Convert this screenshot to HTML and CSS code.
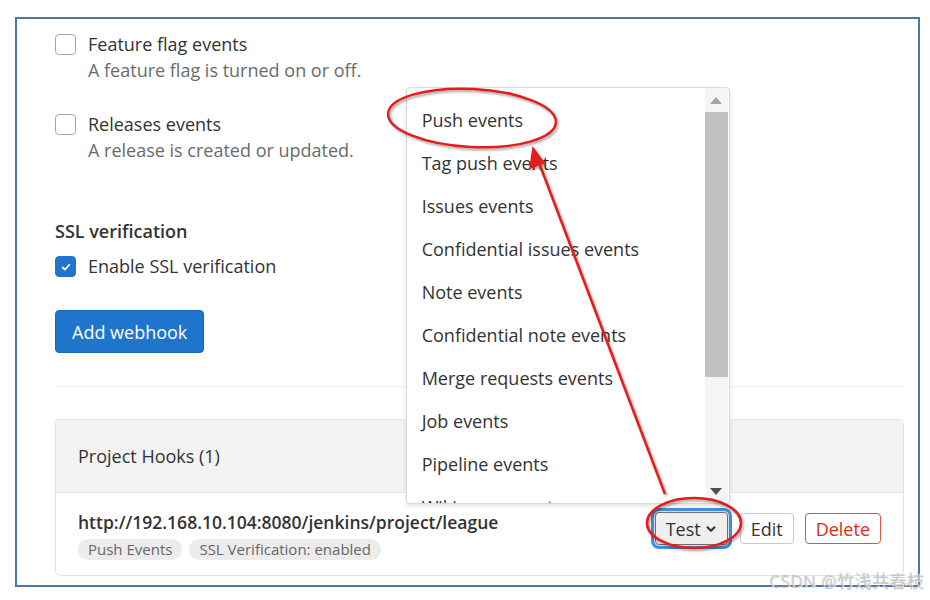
FILE: index.html
```html
<!DOCTYPE html>
<html lang="en">
<head>
  <meta charset="UTF-8">
  <title>Webhooks</title>
  <link rel="stylesheet" href="styles.css">
</head>
<body>
  <div class="frame">
    <div class="event-row">
      <span class="check"></span>
      <div class="event-text">
        <div class="event-title">Feature flag events</div>
        <div class="event-desc">A feature flag is turned on or off.</div>
      </div>
    </div>
    <div class="event-row">
      <span class="check"></span>
      <div class="event-text">
        <div class="event-title">Releases events</div>
        <div class="event-desc">A release is created or updated.</div>
      </div>
    </div>

    <div class="ssl-title">SSL verification</div>
    <div class="event-row ssl-row">
      <span class="check checked">
        <svg viewBox="0 0 16 16" width="12" height="12"><path d="M3.5 8.5l3 3 6-6.5" fill="none" stroke="#fff" stroke-width="2.4" stroke-linecap="round" stroke-linejoin="round"/></svg>
      </span>
      <div class="event-title">Enable SSL verification</div>
    </div>

    <button class="btn-primary">Add webhook</button>

    <div class="divider"></div>

    <div class="card">
      <div class="card-header">Project Hooks (1)</div>
      <div class="card-body">
        <div class="hook-info">
          <div class="hook-url">http://192.168.10.104:8080/jenkins/project/league</div>
          <div class="badges">
            <span class="badge">Push Events</span>
            <span class="badge">SSL Verification: enabled</span>
          </div>
        </div>
        <div class="hook-actions">
          <div class="test-wrap">
            <button class="btn btn-test">Test
              <svg viewBox="0 0 16 16" width="14" height="14"><path d="M4 6l4 4 4-4" fill="none" stroke="#333" stroke-width="2.4" stroke-linecap="round" stroke-linejoin="round"/></svg>
            </button>
            <!-- 下拉菜单 -->
            <div class="dropdown">
              <ul class="dropdown-list">
                <li>Push events</li>
                <li>Tag push events</li>
                <li>Issues events</li>
                <li>Confidential issues events</li>
                <li>Note events</li>
                <li>Confidential note events</li>
                <li>Merge requests events</li>
                <li>Job events</li>
                <li>Pipeline events</li>
                <li>Wiki page events</li>
              </ul>
              <div class="scrollbar">
                <span class="arrow-up"></span>
                <span class="thumb"></span>
                <span class="arrow-down"></span>
              </div>
            </div>
          </div>
          <button class="btn">Edit</button>
          <button class="btn btn-danger">Delete</button>
        </div>
      </div>
    </div>
  </div>

  <!-- 红色标注 -->
  <svg class="marks" viewBox="0 0 930 600" width="930" height="600">
    <defs>
      <filter id="shade" x="-10%" y="-10%" width="120%" height="130%">
        <feDropShadow dx="1.5" dy="2" stdDeviation="1.2" flood-color="#000" flood-opacity="0.35"/>
      </filter>
    </defs>
    <g filter="url(#shade)" stroke="#e31b1b" fill="none" stroke-width="2.5">
      <ellipse cx="472" cy="118" rx="84" ry="29" transform="rotate(3 472 118)"/>
      <line x1="665" y1="494" x2="538" y2="160"/>
      <polygon points="533,148 530,168 544,163" fill="#e31b1b" stroke-width="1.5"/>
      <ellipse cx="694" cy="523" rx="47" ry="25"/>
    </g>
  </svg>

  <div class="watermark">CSDN @竹浅共春枝</div>
</body>
</html>
```

FILE: styles.css
```css
html, body {
  margin: 0;
  padding: 0;
  background: #fff;
}
body {
  width: 930px;
  height: 600px;
  position: relative;
  overflow: hidden;
  font-family: "Open Sans", "Noto Sans CJK SC", sans-serif;
  font-size: 18px;
  color: #333;
}
.frame {
  box-sizing: border-box;
  margin: 17px 0 0 15px;
  width: 905px;
  height: 570px;
  border: 2px solid #4b76a6;
  padding: 12px 14px 0 38px;
}
.event-row {
  display: flex;
  align-items: flex-start;
  margin-bottom: 27px;
}
.check {
  box-sizing: border-box;
  flex: none;
  width: 21px;
  height: 21px;
  margin: 3px 12px 0 0;
  border: 1px solid #a8a8a8;
  border-radius: 4px;
  background: #fff;
  display: flex;
  align-items: center;
  justify-content: center;
}
.check.checked {
  background: #1f75cb;
  border-color: #1f75cb;
}
.event-title {
  line-height: 26px;
}
.event-desc {
  line-height: 27px;
  color: #6b6b6b;
}
.ssl-title {
  margin-top: 54px;
  font-weight: 600;
  line-height: 26px;
}
.ssl-row {
  margin: 9px 0 31px;
}
.btn-primary {
  display: block;
  height: 43px;
  padding: 0 16px;
  font: inherit;
  color: #fff;
  background: #1f75cb;
  border: 1px solid #1a68b8;
  border-radius: 4px;
}
.divider {
  height: 1px;
  background: #ececec;
  margin: 33px 0 32px;
}
.card {
  border: 1px solid #e3e3e3;
  border-radius: 5px;
}
.card-header {
  height: 72px;
  display: flex;
  align-items: center;
  padding: 0 22px;
  background: #f3f3f3;
  border-bottom: 1px solid #e6e6e6;
  border-radius: 5px 5px 0 0;
}
.card-body {
  display: flex;
  justify-content: space-between;
  align-items: flex-start;
  padding: 16px 22px 15px;
}
.hook-url {
  font-size: 17.5px;
  font-weight: 600;
  line-height: 26px;
}
.badges {
  display: flex;
  gap: 7px;
  margin-top: 4px;
}
.badge {
  background: #ececec;
  color: #666;
  font-size: 15px;
  line-height: 21px;
  padding: 0 10px;
  border-radius: 11px;
}
.hook-actions {
  display: flex;
  align-items: center;
  margin-top: 3px;
}
.test-wrap {
  position: relative;
  margin-right: 12px;
}
.btn {
  box-sizing: border-box;
  height: 31px;
  padding: 0 10px;
  font: inherit;
  color: #333;
  background: #fff;
  border: 1px solid #c9c9c9;
  border-radius: 4px;
  display: flex;
  align-items: center;
  gap: 3px;
}
.btn-test {
  height: 33px;
  padding: 0 9px 0 10px;
  background: #efefef;
  border-color: #6f6f6f;
  box-shadow: 0 0 0 1px #dcdcdc, 0 0 0 4px #3f8ede;
}
.btn-danger {
  margin-left: 11px;
  color: #dd2b0e;
  border-color: #e0533d;
}
.dropdown {
  position: absolute;
  right: -2px;
  bottom: 41px;
  box-sizing: border-box;
  width: 324px;
  height: 417px;
  display: flex;
  background: #fff;
  border: 1px solid #d9d9d9;
  border-radius: 4px;
  box-shadow: 0 2px 4px rgba(0, 0, 0, 0.12);
  overflow: hidden;
}
.dropdown-list {
  flex: 1;
  margin: 0;
  padding: 11px 0 0;
  list-style: none;
  overflow: hidden;
}
.dropdown-list li {
  height: 43px;
  line-height: 43px;
  padding: 0 15px;
  white-space: nowrap;
}
.scrollbar {
  flex: none;
  width: 23px;
  margin-right: 1px;
  background: #f5f5f5;
  display: flex;
  flex-direction: column;
  align-items: center;
}
.arrow-up,
.arrow-down {
  width: 0;
  height: 0;
  border-left: 6px solid transparent;
  border-right: 6px solid transparent;
}
.arrow-up {
  margin: 9px 0 8px;
  border-bottom: 7px solid #a3a3a3;
}
.arrow-down {
  margin-top: auto;
  margin-bottom: 8px;
  border-top: 7px solid #505050;
}
.thumb {
  width: 23px;
  height: 265px;
  background: #c1c1c1;
}
.marks {
  position: absolute;
  left: 0;
  top: 0;
  pointer-events: none;
}
.watermark {
  position: absolute;
  right: 5px;
  bottom: 7px;
  font-size: 17px;
  color: rgba(190, 190, 190, 0.8);
  text-shadow: 1px 1px 0 rgba(255, 255, 255, 0.7), -1px -1px 0 rgba(150, 150, 150, 0.35);
  letter-spacing: 0.5px;
}
```
